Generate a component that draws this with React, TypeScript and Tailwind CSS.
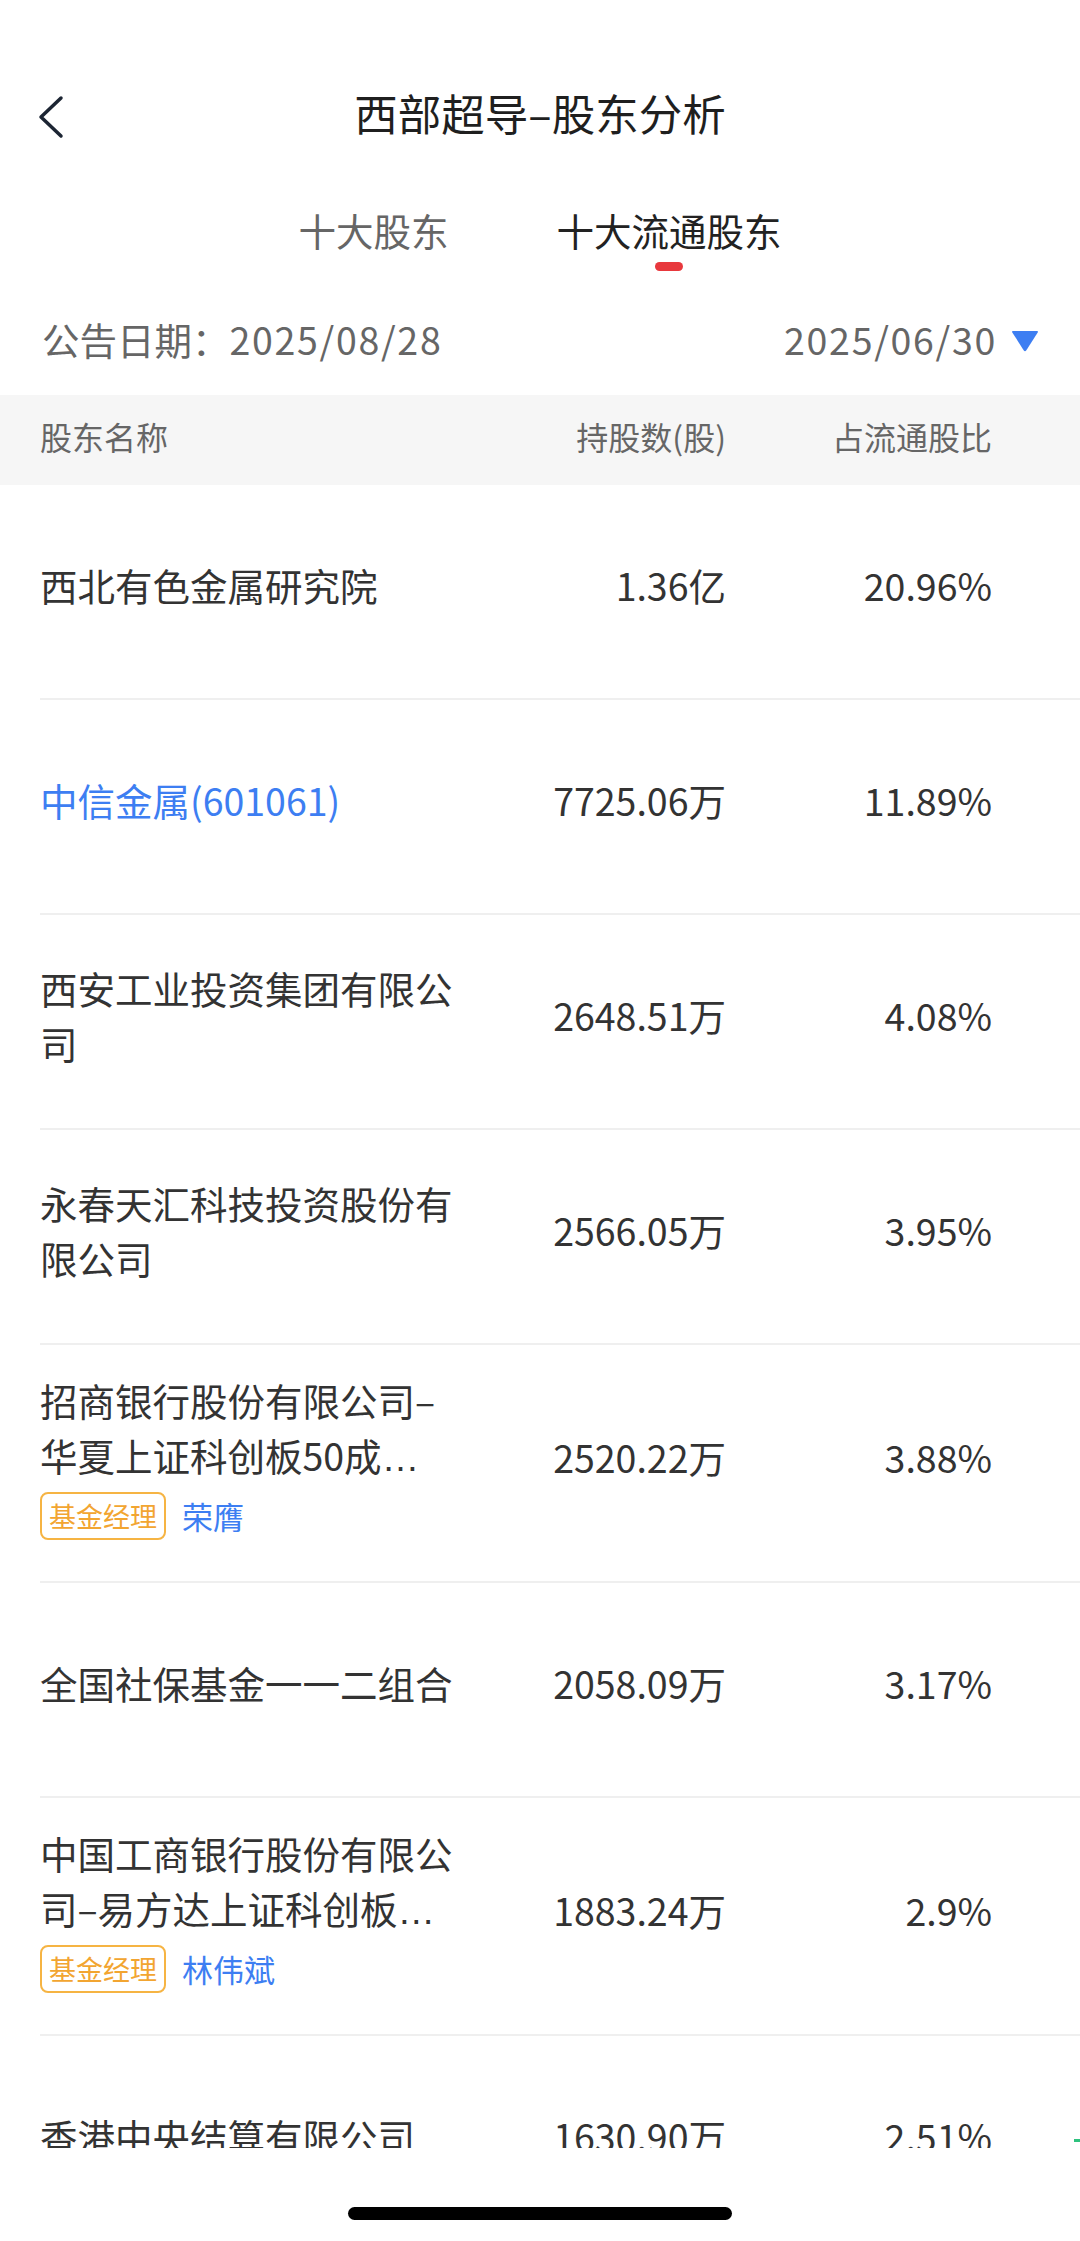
import React from 'react';

interface Holder {
  name: string;
  shares: string;
  ratio: string;
  link?: boolean;
  cut?: boolean;
  manager?: string;
}

const holders: Holder[] = [
  { name: '西北有色金属研究院', shares: '1.36亿', ratio: '20.96%' },
  { name: '中信金属(601061)', link: true, shares: '7725.06万', ratio: '11.89%' },
  { name: '西安工业投资集团有限公司', shares: '2648.51万', ratio: '4.08%' },
  { name: '永春天汇科技投资股份有限公司', shares: '2566.05万', ratio: '3.95%' },
  { name: '招商银行股份有限公司–华夏上证科创板50成', cut: true, manager: '荣膺', shares: '2520.22万', ratio: '3.88%' },
  { name: '全国社保基金一一二组合', shares: '2058.09万', ratio: '3.17%' },
  { name: '中国工商银行股份有限公司–易方达上证科创板', cut: true, manager: '林伟斌', shares: '1883.24万', ratio: '2.9%' },
  { name: '香港中央结算有限公司', shares: '1630.90万', ratio: '2.51%' },
];

const HolderRow: React.FC<{ holder: Holder; last?: boolean }> = ({ holder, last }) => (
  <div className="ml-[40px] flex items-center min-h-[215px] pt-[27px] pb-[41px] border-b-2 border-[#efefef]">
    <div className="w-[420px] shrink-0">
      <p className={`text-[37.5px] leading-[55px] ${holder.link ? 'text-[#3d7ef2]' : 'text-[#333333]'}`}>
        {holder.name}
        {holder.cut && <span className="font-['Liberation_Sans',sans-serif] leading-none">…</span>}
      </p>
      {holder.manager && (
        <div className="mt-[10px] flex items-center gap-[16px]">
          <span className="h-[48px] px-[7px] border-2 border-[#f6b443] rounded-[8px] text-[27px] leading-[44px] text-[#f2a531]">
            基金经理
          </span>
          <span className="text-[31px] leading-[44px] text-[#3d7ef2]">{holder.manager}</span>
        </div>
      )}
    </div>
    <div className="w-[266px] shrink-0 text-right text-[37.5px] leading-[55px] text-[#333333]">{holder.shares}</div>
    <div className="w-[266px] shrink-0 text-right text-[37.5px] leading-[55px] text-[#333333]">{holder.ratio}</div>
    {last && (
      <div className="flex-1 flex justify-end pt-[10px]">
        <div className="w-[6px] h-[3px] bg-[#2ec27e]" />
      </div>
    )}
  </div>
);

export default function App() {
  return (
    <div className="w-[1080px] h-[2241px] bg-white flex flex-col overflow-hidden font-['Noto_Sans_CJK_SC',sans-serif]">
      <div className="h-[60px] shrink-0" />

      {/* nav bar */}
      <div className="h-[114px] shrink-0 grid grid-cols-[1fr_auto_1fr] items-center px-[36px] pb-[8px]">
        <svg width="30" height="44" viewBox="0 0 30 44" fill="none" className="mt-[8px]">
          <path d="M25 3 L5 22 L25 41" stroke="#1c2533" strokeWidth="3.5" strokeLinecap="round" strokeLinejoin="round" />
        </svg>
        <h1 className="text-[43.5px] leading-none text-[#1f1f1f]">西部超导–股东分析</h1>
        <div />
      </div>

      {/* tabs */}
      <div className="h-[101px] shrink-0 flex justify-center items-start gap-[108px] pt-[34px]">
        <div className="flex flex-col items-center">
          <span className="text-[37.5px] leading-[44px] text-[#666666]">十大股东</span>
        </div>
        <div className="flex flex-col items-center">
          <span className="text-[37.5px] leading-[44px] text-[#222222]">十大流通股东</span>
          <div className="mt-[10px] w-[28px] h-[9px] rounded-full bg-[#e8383d]" />
        </div>
      </div>

      {/* date row */}
      <div className="h-[120px] shrink-0 flex items-center justify-between pl-[42px] pr-[41px] pt-[8px] text-[37.5px] text-[#666666]">
        <span>
          公告日期：<span className="tracking-[1.7px]">2025/08/28</span>
        </span>
        <div className="flex items-center gap-[14px]">
          <span className="tracking-[1.7px]">2025/06/30</span>
          <svg width="28" height="22" viewBox="0 0 28 22" className="mt-[4px]">
            <path d="M2 1 H26 Q27.5 1 26.7 2.4 L15.2 20.4 Q14 22 12.8 20.4 L1.3 2.4 Q0.5 1 2 1 Z" fill="#3d7ef2" />
          </svg>
        </div>
      </div>

      {/* table header */}
      <div className="h-[90px] shrink-0 bg-[#f6f6f6] flex items-center pl-[40px] pb-[8px] text-[32px] text-[#666666]">
        <div className="w-[420px] shrink-0">股东名称</div>
        <div className="w-[266px] shrink-0 text-right">持股数(股)</div>
        <div className="w-[266px] shrink-0 text-right">占流通股比</div>
      </div>

      {/* list */}
      <div className="h-[1663px] shrink-0 overflow-hidden">
        {holders.map((h, i) => (
          <HolderRow key={h.name} holder={h} last={i === holders.length - 1} />
        ))}
      </div>

      {/* home indicator */}
      <div className="flex-1 flex justify-center">
        <div className="mt-[59px] w-[384px] h-[13px] rounded-full bg-black" />
      </div>
    </div>
  );
}
